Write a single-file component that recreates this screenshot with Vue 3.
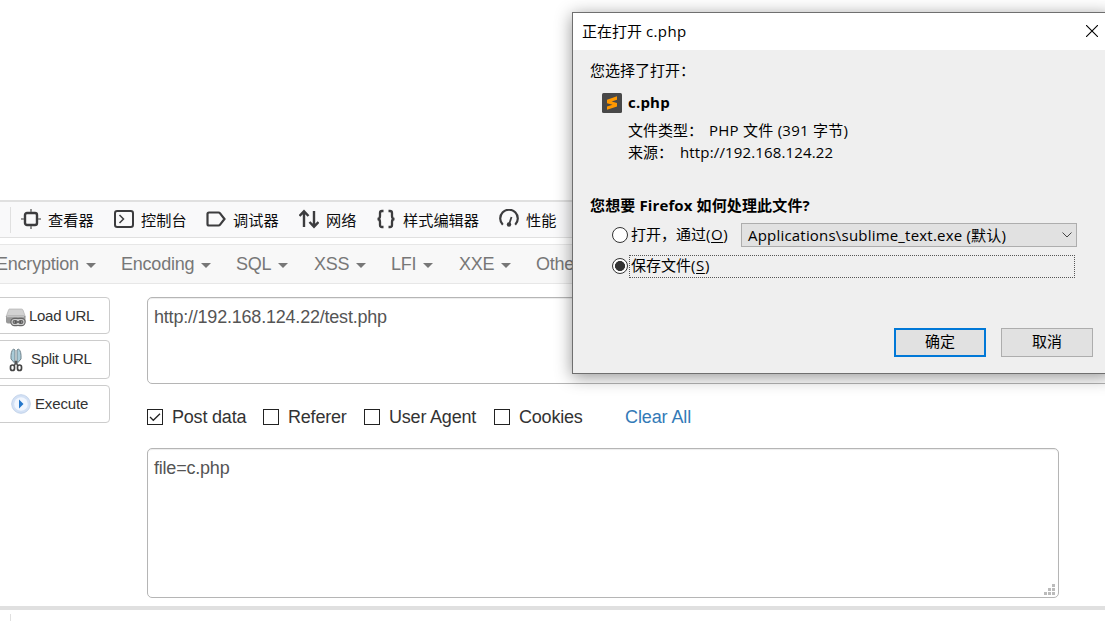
<template>
  <div class="page">
    <div class="blank"></div>

    <!-- Devtools tabs -->
    <div class="devtools">
      <span class="divider"></span>
      <div v-for="tab in tabs" :key="tab.icon" class="tab" :style="{ width: tab.width + 'px' }">
        <svg class="tab-icon" viewBox="0 0 20 20" fill="none" stroke="#3c3c3e" stroke-width="2">
          <template v-if="tab.icon === 'inspector'">
            <rect x="4" y="4" width="12" height="12" rx="2" stroke-width="2.4" />
            <path d="M10 0v3M10 17v3M0 10h3M17 10h3" stroke="#777" stroke-width="1.600" />
          </template>
          <template v-else-if="tab.icon === 'console'">
            <rect x="1" y="2" width="18" height="16" rx="2.200" />
            <path d="M5.500 6l4 4-4 4" stroke-width="1.500" />
          </template>
          <path v-else-if="tab.icon === 'debugger'" d="M3 3.500h9.500q1 0 1.600.8L18.500 10l-4.400 5.700q-.6.8-1.600.8H3q-1.500 0-1.500-1.500V5q0-1.500 1.500-1.500z" stroke-width="2.200" />
          <path v-else-if="tab.icon === 'network'" d="M5 18V2M.5 7L5 2.300 9.500 7M15 2v16M10.500 13l4.500 4.700 4.500-4.700" stroke-width="2.400" />
          <path v-else-if="tab.icon === 'style'" d="M7.500 2H6Q4 2 4 4v3q0 3-2.500 3Q4 10 4 13v3q0 2 2 2h1.500M12.500 2H14q2 0 2 2v3q0 3 2.500 3-2.500 0-2.500 3v3q0 2-2 2h-1.500" stroke-width="2.300" />
          <template v-else>
            <path d="M3.800 15.800A8.800 8.800 0 1 1 16.200 15.800" stroke-width="2.200" />
            <circle cx="10" cy="15.500" r="2.200" fill="#3c3c3e" stroke="none" />
            <path d="M10 15.500L12.500 8" stroke-width="1.800" />
          </template>
        </svg>
        <span>{{ tab.label }}</span>
      </div>
    </div>

    <!-- Hackbar menu -->
    <div class="menubar">
      <div v-for="item in menus" :key="item.label" class="menu" :style="{ width: item.width + 'px' }">
        {{ item.label }}<i class="caret"></i>
      </div>
    </div>

    <div class="workspace">
      <div class="actions">
        <button class="action load">
          <svg width="22" height="20" viewBox="0 0 22 20">
            <path d="M4.500 1h12q1 0 1.500 1l2.500 7H1l2.500-7q.3-1 1-1z" fill="#d2d2d2" stroke="#aaa" stroke-width=".6" />
            <rect x="1" y="7.500" width="19.500" height="8" rx="2" fill="#999" />
            <path d="M2 8.500h17" stroke="#c4c4c4" stroke-width="1.500" />
            <g fill="none" stroke="#666" stroke-width="3.400">
              <rect x="7" y="11.500" width="7" height="5" rx="2.500" />
              <rect x="12" y="11.500" width="7" height="5" rx="2.500" />
            </g>
            <g fill="none" stroke="#ccc" stroke-width="1.200">
              <rect x="7" y="11.500" width="7" height="5" rx="2.500" />
              <rect x="12" y="11.500" width="7" height="5" rx="2.500" />
            </g>
            <path d="M10 14h6" stroke="#444" stroke-width="1.200" />
          </svg>
          Load URL
        </button>
        <button class="action split">
          <svg width="14" height="24" viewBox="0 0 14 24">
            <path d="M4.500 1Q1.500 3 2 11l4 4.500V2zM9.500 1q3 2 2.500 10l-4 4.500V2z" fill="#a9cbd8" stroke="#71838c" />
            <path d="M6 13l3 5M8 13l-3 5" stroke="#555" stroke-width="1.500" />
            <rect x="1.500" y="17" width="4" height="5.500" rx="2" fill="none" stroke="#444" stroke-width="1.700" />
            <rect x="8.500" y="17" width="4" height="5.500" rx="2" fill="none" stroke="#444" stroke-width="1.700" />
          </svg>
          <span>Split URL</span>
        </button>
        <button class="action execute">
          <svg width="20" height="20" viewBox="0 0 20 20">
            <circle cx="10" cy="10" r="9.300" fill="#d3e1f5" stroke="#c3d3ea" />
            <circle cx="10" cy="10" r="6.800" fill="#f1f6fe" />
            <path d="M8 5.500l4.500 4.500L8 14.500z" fill="#2477cb" />
          </svg>
          <span>Execute</span>
        </button>
      </div>

      <div class="fields">
        <div class="field url">http://192.168.124.22/test.php</div>
        <div class="checks">
          <label v-for="c in checks" :key="c.label" class="check" :style="{ width: c.width + 'px' }">
            <svg width="16" height="16" viewBox="0 0 16 16" fill="none">
              <rect x=".5" y=".5" width="15" height="15" fill="#fff" stroke="#222" />
              <path v-if="c.checked" d="M3 8l3.300 3.300L13 4.700" stroke="#222" stroke-width="1.300" />
            </svg>
            {{ c.label }}
          </label>
          <a class="clear">Clear All</a>
        </div>
        <div class="field post">
          file=c.php
          <svg class="grip" width="11" height="11" viewBox="0 0 11 11" fill="#bbb">
            <path d="M8 0h3v3H8zM4 4h3v3H4zM8 4h3v3H8zM0 8h3v3H0zM4 8h3v3H4zM8 8h3v3H8z" />
          </svg>
        </div>
      </div>
    </div>

    <div class="splitter"></div>
    <div class="footer"><span></span></div>

    <!-- Download dialog -->
    <div class="dialog">
      <div class="titlebar">
        <span>正在打开 <span class="latin">c.php</span></span>
        <svg width="12" height="12" viewBox="0 0 12 12" stroke="#000" stroke-width="1.100">
          <path d="M0 0l12 12M12 0L0 12" />
        </svg>
      </div>
      <div class="content">
        <div class="intro">您选择了打开：</div>
        <div class="file">
          <svg width="20" height="20" viewBox="0 0 20 20">
            <rect width="20" height="20" rx="1.500" fill="#484848" />
            <path d="M15 3.300L5 6.700v3.500l5.500 1.600L5 13.500v3.300l10-3.300v-3.600L9.600 8.400 15 6.700z" fill="#ff9800" />
          </svg>
          <strong>c.php</strong>
        </div>
        <div class="meta"><span class="type">文件类型：</span><span class="type-value">PHP 文件 (391 字节)</span></div>
        <div class="meta source"><span class="origin">来源：</span><span class="origin-value">http://192.168.124.22</span></div>
        <div class="question">您想要 Firefox 如何处理此文件?</div>
        <div class="option open">
          <i class="radio"></i>
          <span class="open-label">打开，通过<span class="key">(<u>O</u>)</span></span>
          <div class="select">
            <span>Applications\sublime_text.exe (默认)</span>
            <svg width="10" height="6" viewBox="0 0 10 6" fill="none" stroke="#444"><path d="M.5.5L5 5 9.500.5" /></svg>
          </div>
        </div>
        <div class="option save">
          <i class="radio on"></i>
          <span class="focus">保存文件<span class="key">(<u>S</u>)</span></span>
        </div>
        <div class="buttons">
          <button class="btn primary">确定</button>
          <button class="btn">取消</button>
        </div>
      </div>
    </div>
  </div>
</template>

<script setup>
const tabs = [
  { icon: 'inspector', label: '查看器', width: 93 },
  { icon: 'console', label: '控制台', width: 92 },
  { icon: 'debugger', label: '调试器', width: 93 },
  { icon: 'network', label: '网络', width: 77 },
  { icon: 'style', label: '样式编辑器', width: 123 },
  { icon: 'performance', label: '性能', width: 90 }
]

const menus = [
  { label: 'Encryption', width: 125 },
  { label: 'Encoding', width: 115 },
  { label: 'SQL', width: 78 },
  { label: 'XSS', width: 77 },
  { label: 'LFI', width: 68 },
  { label: 'XXE', width: 77 },
  { label: 'Other', width: 100 }
]

const checks = [
  { label: 'Post data', width: 116, checked: true },
  { label: 'Referer', width: 101 },
  { label: 'User Agent', width: 130 },
  { label: 'Cookies', width: 131 }
]
</script>

<style>
body {
  margin: 0;
  overflow: hidden;
  background: #fff;
}
</style>

<style scoped>
.page {
  position: relative;
  width: 1105px;
  height: 621px;
  overflow: hidden;
  font-family: "Liberation Sans", "Noto Sans CJK SC", sans-serif;
  font-size: 18px;
  color: #333;
}

.page * {
  box-sizing: border-box;
}

svg {
  display: block;
  flex: none;
}

.blank {
  height: 200px;
}

.devtools {
  display: flex;
  align-items: center;
  height: 38px;
  padding-left: 10px;
  background: #f9f9fa;
  border-top: 2px solid #e0e0e0;
  border-bottom: 1px solid #e0e0e0;
  font-family: "Noto Sans CJK SC", sans-serif;
  font-size: 15.2px;
  color: #0c0c0d;
}

.divider {
  width: 1px;
  height: 26px;
  margin-right: 10px;
  background: #e0e0e0;
}

.tab {
  display: flex;
  align-items: center;
  flex: none;
  gap: 7px;
  padding-bottom: 2px;
  white-space: nowrap;
}

.tab-icon {
  width: 20px;
  height: 20px;
}

.menubar {
  display: flex;
  align-items: center;
  height: 40px;
  margin-top: 6px;
  background: #f8f8f8;
  border-top: 1px solid #e7e7e7;
  border-bottom: 1px solid #e7e7e7;
  letter-spacing: -0.22px;
  color: #777;
}

.menu {
  display: flex;
  align-items: center;
  flex: none;
}

.menu:first-child {
  margin-left: -4px;
}

.caret {
  margin: 3px 0 0 7px;
  border: 5px solid transparent;
  border-top-color: #777;
  border-bottom: 0;
}

.workspace {
  display: flex;
  gap: 37px;
  height: 322px;
  padding-top: 13px;
}

.actions {
  flex: none;
  width: 120px;
  margin-left: -10px;
}

.action {
  display: flex;
  align-items: center;
  width: 100%;
  height: 37px;
  padding: 0 0 0 14px;
  background: #fff;
  border: 1px solid #ccc;
  border-radius: 4px;
  font-family: inherit;
  font-size: 15px;
  letter-spacing: -0.3px;
  color: #333;
}

.action span {
  padding-bottom: 2px;
}

.load {
  gap: 2px;
}

.load svg {
  margin-top: 5px;
}

.split {
  gap: 8px;
  height: 39px;
  margin-top: 6px;
  padding-left: 18px;
}

.execute {
  gap: 4px;
  height: 38px;
  margin-top: 6px;
  padding-left: 20px;
  letter-spacing: -0.15px;
}

.fields {
  flex: none;
  width: 960px;
}

.field {
  position: relative;
  padding: 9px 6px;
  line-height: 21px;
  border: 1px solid #b5b5b5;
  border-radius: 5px;
  box-shadow: inset 0 1px 1px rgba(0, 0, 0, 0.075);
  letter-spacing: -0.21px;
  color: #555;
}

.url {
  width: 1000px;
  height: 87px;
}

.checks {
  display: flex;
  align-items: center;
  height: 64px;
  padding-top: 2px;
  letter-spacing: -0.2px;
}

.check {
  display: flex;
  align-items: center;
  flex: none;
  gap: 9px;
}

.clear {
  letter-spacing: -0.1px;
  color: #337ab7;
}

.post {
  width: 912px;
  height: 150px;
}

.grip {
  position: absolute;
  right: 3px;
  bottom: 2px;
}

.splitter {
  height: 4px;
  background: #e0e0e0;
}

.footer {
  padding: 4px 0 0 10px;
}

.footer span {
  display: block;
  width: 1px;
  height: 7px;
  background: #e0e0e0;
}

.dialog {
  position: absolute;
  top: 12px;
  left: 572px;
  width: 540px;
  height: 362px;
  background: #efefef;
  border: 1px solid #6f6f6f;
  box-shadow: 0 3px 16px rgba(0, 0, 0, 0.42);
  font-family: "Open Sans", "Noto Sans CJK SC", sans-serif;
  font-size: 15px;
  line-height: 22px;
  color: #000;
  white-space: nowrap;
}

.titlebar {
  display: flex;
  align-items: center;
  justify-content: space-between;
  height: 37px;
  padding: 0 13px 2px 9px;
  background: #fff;
}

.latin {
  letter-spacing: 0.4px;
}

.content {
  padding: 9px 0 0 17px;
}

.file {
  display: flex;
  align-items: center;
  gap: 6px;
  height: 22px;
  margin-top: 11px;
  padding-left: 12px;
}

.file strong {
  padding-bottom: 2px;
  letter-spacing: 0.2px;
}

.meta {
  display: flex;
  margin-top: 5px;
  padding-left: 38px;
}

.source {
  margin-top: 0;
}

.type {
  width: 81px;
}

.type-value {
  letter-spacing: 0.25px;
}

.origin {
  width: 52px;
}

.origin-value {
  letter-spacing: 0.15px;
}

.question {
  margin-top: 31px;
  font-weight: bold;
  letter-spacing: 0.13px;
}

.option {
  display: flex;
  align-items: center;
  padding-left: 22px;
}

.open {
  height: 24px;
  margin-top: 7px;
}

.radio {
  flex: none;
  width: 16px;
  height: 16px;
  background: #fff;
  border: 1px solid #333;
  border-radius: 50%;
}

.radio.on {
  margin-bottom: 2px;
  background: radial-gradient(circle, #333 4.700px, #fff 5.300px);
}

.open-label {
  width: 113px;
  padding: 0 0 2px 3px;
}

.key {
  letter-spacing: 0.6px;
}

u {
  text-underline-offset: 2px;
}

.select {
  display: flex;
  align-items: center;
  justify-content: space-between;
  width: 336px;
  height: 24px;
  padding: 0 4px 0 6px;
  background: #e1e1e1;
  border: 1px solid #adadad;
  letter-spacing: 0.2px;
}

.select svg {
  margin-bottom: 1px;
}

.save {
  margin-top: 8px;
}

.focus {
  width: 446px;
  height: 23px;
  margin-left: 1px;
  padding-left: 1px;
  line-height: 18px;
  border: 1px dotted #555;
}

.buttons {
  display: flex;
  gap: 15px;
  margin-top: 50px;
  padding-left: 304px;
}

.btn {
  width: 92px;
  height: 29px;
  padding: 0 0 4px;
  background: #e1e1e1;
  border: 1px solid #adadad;
  font: inherit;
  color: #000;
}

.primary {
  border: 2px solid #0078d7;
}
</style>
